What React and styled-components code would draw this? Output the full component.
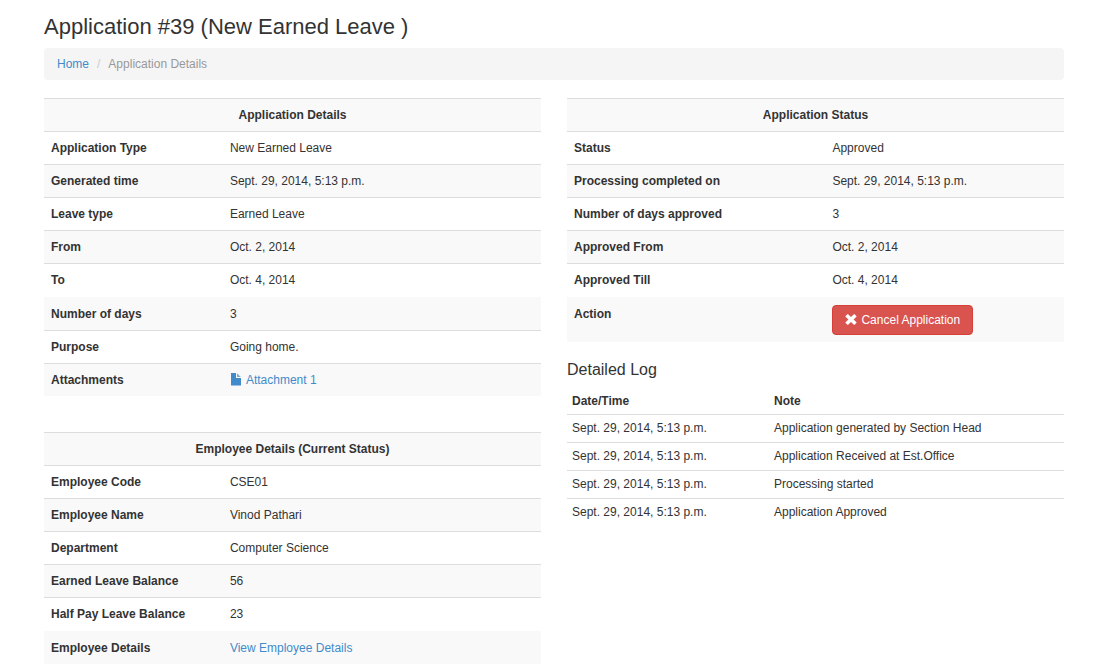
import React from "react";
import styled, { createGlobalStyle } from "styled-components";

const GlobalStyle = createGlobalStyle`
  *, *::before, *::after { box-sizing: border-box; }
  body {
    margin: 0;
    background: #fff;
    color: #333;
    font-family: "Liberation Sans", Arial, sans-serif;
    font-size: 12px;
    line-height: 20px;
  }
`;

const Page = styled.main`
  padding: 14px 45px 0 44px;
`;

const Title = styled.h1`
  margin: 0 0 8px;
  font-size: 22px;
  font-weight: 400;
  line-height: 26px;
`;

const Breadcrumb = styled.ol`
  display: flex;
  margin: 0 0 18px;
  padding: 6px 13px;
  list-style: none;
  background: #f5f5f5;
  border-radius: 4px;
`;

const Crumb = styled.li`
  color: #999;

  & + &::before {
    content: "/";
    padding: 0 8px;
    color: #ccc;
  }
`;

const Link = styled.a`
  color: #428bca;
  text-decoration: none;

  &:hover {
    color: #2a6496;
    text-decoration: underline;
  }
`;

const Columns = styled.div`
  display: grid;
  grid-template-columns: 1fr 1fr;
  gap: 26px;
  align-items: start;
`;

const Stack = styled.div`
  display: flex;
  flex-direction: column;
  gap: ${(p) => p.$gap}px;
`;

const DetailTable = styled.table`
  width: 100%;
  table-layout: fixed;
  border-spacing: 0;
`;

const LabelCol = styled.col`
  width: ${(p) => p.$width};
`;

const DetailRow = styled.tr`
  background: ${(p) => (p.$striped ? "#f9f9f9" : "#fff")};

  > * {
    padding: ${(p) => (p.$plain ? "7px 7px 6px" : "6px 7px")};
    text-align: left;
    vertical-align: top;
    border-top: 1px solid ${(p) => (p.$plain ? "#fff" : "#ddd")};
  }

  > th[colspan] {
    text-align: center;
  }
`;

const LogTable = styled.table`
  width: 100%;
  table-layout: fixed;
  border-spacing: 0;

  th, td {
    padding: 4px 5px 3px;
    text-align: left;
  }

  td {
    padding: 3px 5px 4px;
    border-top: 1px solid #ddd;
  }
`;

const LogSection = styled.section`
  display: flex;
  flex-direction: column;
  gap: 7px;
`;

const SectionTitle = styled.h2`
  margin: 0;
  font-size: 16px;
  font-weight: 400;
  line-height: 20px;
`;

const DangerButton = styled.button`
  display: inline-flex;
  align-items: center;
  gap: 4px;
  height: 30px;
  margin: 1px 0;
  padding: 0 12px;
  font: inherit;
  color: #fff;
  background: #d9534f;
  border: 1px solid #d43f3a;
  border-radius: 4px;
  cursor: pointer;
  vertical-align: top;
  white-space: nowrap;
`;

const FileGlyph = styled.svg`
  width: 12px;
  height: 13px;
  margin-right: 4px;
  vertical-align: -2px;
`;

const CrossGlyph = styled.svg`
  width: 12px;
  height: 12px;
`;

const FileIcon = () => (
  <FileGlyph viewBox="0 0 12 13" fill="currentColor" aria-hidden="true">
    <path d="M1 0h5v5h5v7.4H1z" />
    <path d="M7 0.2L10.8 4H7z" opacity=".7" />
  </FileGlyph>
);

const CrossIcon = () => (
  <CrossGlyph viewBox="0 0 12 12" fill="currentColor" aria-hidden="true">
    <path d="M3.1.2L6 3.1 8.9.2q.3-.3.6 0l1.9 1.9q.3.3 0 .6L8.6 5.5l2.8 2.8q.3.3 0 .6l-1.9 1.9q-.3.3-.6 0L6 7.9l-2.9 2.9q-.3.3-.6 0L.6 8.9q-.3-.3 0-.6l2.8-2.8L.6 2.7q-.3-.3 0-.6L2.5.2q.3-.3.6 0z" />
  </CrossGlyph>
);

function Details({ title, rows, labelWidth, plainRow }) {
  return (
    <DetailTable>
      <colgroup>
        <LabelCol $width={labelWidth} />
        <col />
      </colgroup>
      <thead>
        <DetailRow $striped>
          <th colSpan={2}>{title}</th>
        </DetailRow>
      </thead>
      <tbody>
        {rows.map(([label, value], i) => (
          <DetailRow key={label} $striped={i % 2 === 1} $plain={label === plainRow}>
            <th scope="row">{label}</th>
            <td>{value}</td>
          </DetailRow>
        ))}
      </tbody>
    </DetailTable>
  );
}

const TIME = "Sept. 29, 2014, 5:13 p.m.";

const application = [
  ["Application Type", "New Earned Leave"],
  ["Generated time", TIME],
  ["Leave type", "Earned Leave"],
  ["From", "Oct. 2, 2014"],
  ["To", "Oct. 4, 2014"],
  ["Number of days", "3"],
  ["Purpose", "Going home."],
  ["Attachments", <Link href="#attachment-1"><FileIcon />Attachment 1</Link>],
];

const employee = [
  ["Employee Code", "CSE01"],
  ["Employee Name", "Vinod Pathari"],
  ["Department", "Computer Science"],
  ["Earned Leave Balance", "56"],
  ["Half Pay Leave Balance", "23"],
  ["Employee Details", <Link href="#employee">View Employee Details</Link>],
];

const status = [
  ["Status", "Approved"],
  ["Processing completed on", TIME],
  ["Number of days approved", "3"],
  ["Approved From", "Oct. 2, 2014"],
  ["Approved Till", "Oct. 4, 2014"],
  ["Action", <DangerButton type="button"><CrossIcon />Cancel Application</DangerButton>],
];

const log = [
  "Application generated by Section Head",
  "Application Received at Est.Office",
  "Processing started",
  "Application Approved",
];

export default function App() {
  return (
    <>
      <GlobalStyle />
      <Page>
        <Title>Application #39 (New Earned Leave )</Title>
        <nav aria-label="Breadcrumb">
          <Breadcrumb>
            <Crumb><Link href="#home">Home</Link></Crumb>
            <Crumb aria-current="page">Application Details</Crumb>
          </Breadcrumb>
        </nav>
        <Columns>
          <Stack $gap={36}>
            <Details title="Application Details" rows={application} labelWidth="36%" plainRow="Number of days" />
            <Details title="Employee Details (Current Status)" rows={employee} labelWidth="36%" plainRow="Employee Details" />
          </Stack>
          <Stack $gap={18}>
            <Details title="Application Status" rows={status} labelWidth="52%" plainRow="Action" />
            <LogSection>
              <SectionTitle>Detailed Log</SectionTitle>
              <LogTable>
                <colgroup>
                  <LabelCol $width="202px" />
                  <col />
                </colgroup>
                <thead>
                  <tr>
                    <th scope="col">Date/Time</th>
                    <th scope="col">Note</th>
                  </tr>
                </thead>
                <tbody>
                  {log.map((note) => (
                    <tr key={note}>
                      <td>{TIME}</td>
                      <td>{note}</td>
                    </tr>
                  ))}
                </tbody>
              </LogTable>
            </LogSection>
          </Stack>
        </Columns>
      </Page>
    </>
  );
}
